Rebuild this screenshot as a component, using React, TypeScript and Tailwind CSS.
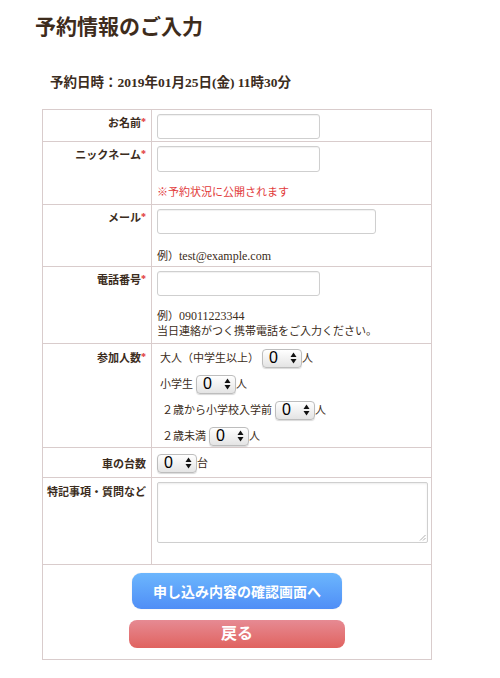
import React from "react";

const serif = { fontFamily: '"Liberation Serif", "Noto Sans CJK JP", serif' };

function Req() {
  return <span className="text-[#e03030] text-[10px] align-top relative top-[-1px]">*</span>;
}

function Select() {
  return (
    <span
      className="inline-flex items-center justify-between w-[40px] h-[19px] rounded-[4px] border border-[#bdbdbd] bg-gradient-to-b from-white to-[#e4e4e4] shadow-[0_1px_1px_rgba(0,0,0,0.15)] pl-[6px] pr-[4px] align-middle"
      style={{ fontFamily: '"Liberation Sans", Arial, sans-serif' }}
    >
      <span className="text-[16px] leading-none text-black">0</span>
      <svg width="7" height="12" viewBox="0 0 7 12">
        <path d="M3.5 0.5 L6.5 5 L0.5 5 Z" fill="#111" />
        <path d="M3.5 11.5 L6.5 7 L0.5 7 Z" fill="#111" />
      </svg>
    </span>
  );
}

function Row({ label, h, children, pt = "pt-[6px]" }: { label: React.ReactNode; h: string; children: React.ReactNode; pt?: string }) {
  return (
    <div className={`flex border-t border-[#d9cccc] ${h}`}>
      <div className={`w-[109px] shrink-0 border-r border-[#d9cccc] text-right pr-[5px] ${pt} text-[11px] leading-[14px] font-bold text-[#3b2c20] whitespace-nowrap`}>
        {label}
      </div>
      <div className="flex-1 pl-[5px] pt-[4px] text-[11px] leading-[15px] text-[#3b2c20] whitespace-nowrap">{children}</div>
    </div>
  );
}

const inputCls = "block h-[25px] rounded-[3px] border border-[#cfcfcf] bg-white shadow-[inset_0_1px_1px_rgba(0,0,0,0.06)]";
const latin = "text-[12px]";

export default function App() {
  return (
    <div className="w-[500px] h-[678px] bg-white overflow-hidden" style={serif}>
      <h1 className="ml-[35px] pt-[14px] text-[21px] leading-[26px] font-bold text-[#3e2c1c]">予約情報のご入力</h1>
      <p className="ml-[50px] mt-[35px] text-[13.5px] leading-[16px] font-bold text-[#3b2c20]">予約日時：2019年01月25日(金) 11時30分</p>
      <div className="ml-[42px] mt-[18px] w-[390px] border border-t-0 border-[#d9cccc]">
        <Row label={<>お名前<Req /></>} h="h-[32px]">
          <div className={`${inputCls} w-[163px]`} />
        </Row>
        <Row label={<>ニックネーム<Req /></>} h="h-[63px]">
          <div className={`${inputCls} w-[163px] h-[26px]`} />
          <p className="mt-[13px] text-[#e23a3a]">※予約状況に公開されます</p>
        </Row>
        <Row label={<>メール<Req /></>} h="h-[62px]">
          <div className={`${inputCls} w-[219px]`} />
          <p className="mt-[15px]">例）<span className={latin}>test@example.com</span></p>
        </Row>
        <Row label={<>電話番号<Req /></>} h="h-[77px]">
          <div className={`${inputCls} w-[163px]`} />
          <p className="mt-[13px]">例）<span className={latin}>09011223344</span></p>
          <p>当日連絡がつく携帯電話をご入力ください。</p>
        </Row>
        <Row label={<>参加人数<Req /></>} h="h-[104px]" pt="pt-[7px]">
          <div className="pl-[3px] flex flex-col gap-[6px]">
            <div className="flex items-center h-[20px]">
              <span>大人（中学生以上）</span>
              <span className="ml-[3px]"><Select /></span>
              <span>人</span>
            </div>
            <div className="flex items-center h-[20px]">
              <span>小学生</span>
              <span className="ml-[3px]"><Select /></span>
              <span>人</span>
            </div>
            <div className="flex items-center h-[20px]">
              <span className="ml-[2px]">２歳から小学校入学前</span>
              <span className="ml-[3px]"><Select /></span>
              <span>人</span>
            </div>
            <div className="flex items-center h-[20px]">
              <span className="ml-[2px]">２歳未満</span>
              <span className="ml-[3px]"><Select /></span>
              <span>人</span>
            </div>
          </div>
        </Row>
        <Row label="車の台数" h="h-[30px]" pt="pt-[9px]">
          <div className="flex items-center h-[22px]">
            <Select />
            <span>台</span>
          </div>
        </Row>
        <Row label="特記事項・質問など" h="h-[87px]" pt="pt-[7px]">
          <div className="relative w-[271px] h-[61px] rounded-[2px] border border-[#cfcfcf] bg-white shadow-[inset_0_1px_2px_rgba(0,0,0,0.08)]">
            <svg className="absolute right-[1px] bottom-[1px]" width="7" height="7" viewBox="0 0 7 7">
              <path d="M6.5 1 L1 6.5 M6.5 4 L4 6.5" stroke="#999" strokeWidth="0.8" />
            </svg>
          </div>
        </Row>
        <div className="border-t border-[#d9cccc] h-[95px] flex flex-col items-center pt-[8px]">
          <button
            className="w-[210px] h-[36px] rounded-[9px] bg-gradient-to-b from-[#6cb6fd] to-[#508ef6] text-white text-[14px] font-bold shadow-[0_0_1px_rgba(0,0,0,0.2)]"
            style={{ fontFamily: '"Noto Sans CJK JP", sans-serif' }}
          >
            申し込み内容の確認画面へ
          </button>
          <button
            className="mt-[11px] w-[216px] h-[28px] rounded-[8px] bg-gradient-to-b from-[#e68a93] to-[#e0625f] text-white text-[16px] font-bold leading-none"
            style={serif}
          >
            戻る
          </button>
        </div>
      </div>
    </div>
  );
}
